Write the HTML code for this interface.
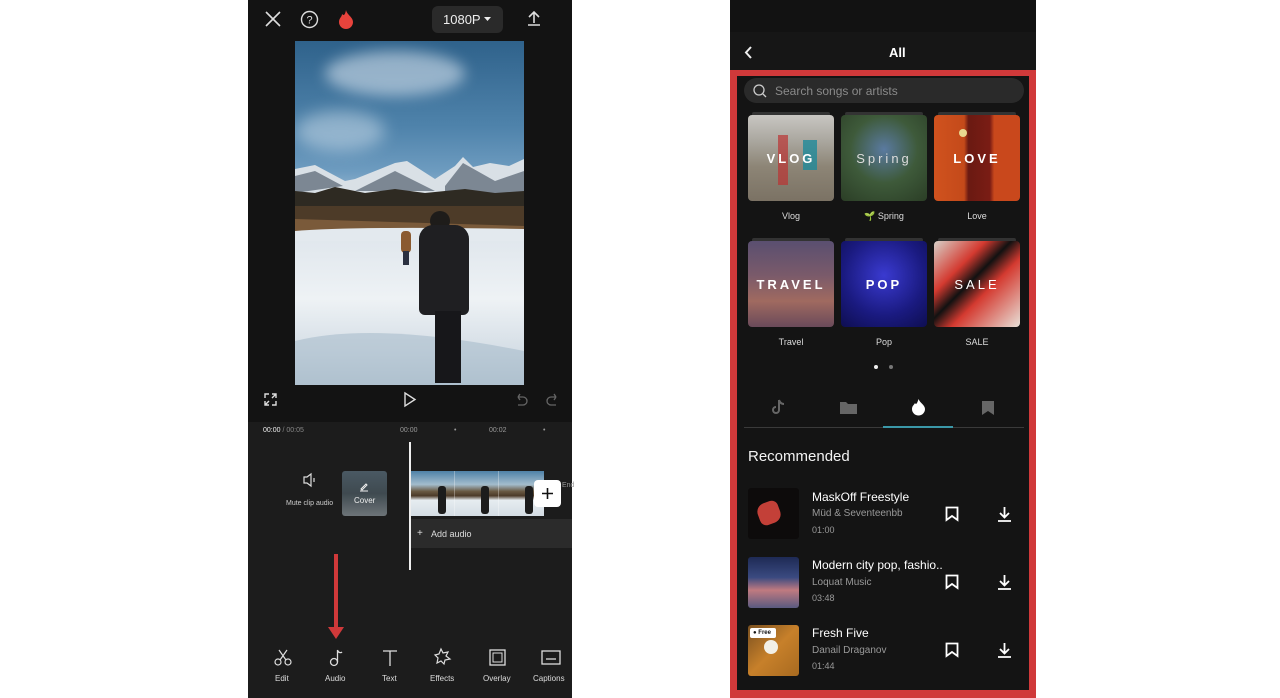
<!DOCTYPE html>
<html><head><meta charset="utf-8">
<style>
*{margin:0;padding:0;box-sizing:border-box}
body{width:1280px;height:698px;background:#fff;position:relative;overflow:hidden;font-family:"Liberation Sans",sans-serif;color:#fff}
.a{position:absolute}
.t{position:absolute;white-space:nowrap}
svg{position:absolute;overflow:visible}
.tile{position:absolute;width:86px;height:86px;border-radius:4px;overflow:hidden}
.tile .lab{position:absolute;left:0;right:0;top:36px;text-align:center;font-size:13px;font-weight:bold;letter-spacing:3px;color:#fff}
.cap{position:absolute;width:86px;text-align:center;font-size:9px;color:#ddd}
.song{position:absolute;left:812px;font-size:12px}
</style></head><body>

<!-- LEFT PHONE -->
<div class="a" style="left:248px;top:0;width:324px;height:698px;background:#131313"></div>
<div class="a" style="left:248px;top:422px;width:324px;height:276px;background:#1c1c1c"></div>
<!-- top bar -->
<svg style="left:264px;top:10px" width="18" height="18"><path d="M2 2L16 16M16 2L2 16" stroke="#ddd" stroke-width="1.6"/></svg>
<svg style="left:300px;top:10px" width="19" height="19"><circle cx="9.5" cy="9.5" r="8" fill="none" stroke="#ddd" stroke-width="1.4"/><text x="9.5" y="13.5" font-size="11" fill="#ddd" text-anchor="middle" font-family="Liberation Sans">?</text></svg>
<svg style="left:337px;top:9px" width="18" height="20"><path d="M9 1C10 6 16 8 16 13A7 7 0 0 1 2 13C2 9 5 8 5 5C7 7 8 6 9 1Z" fill="#e8433c"/></svg>
<div class="a" style="left:432px;top:6px;width:71px;height:27px;border-radius:6px;background:#2a2a2a"></div>
<div class="t" style="left:443px;top:12px;font-size:13px;color:#eee">1080P</div>
<svg style="left:484px;top:17px" width="8" height="5"><path d="M0 0H7L3.5 4Z" fill="#eee"/></svg>
<svg style="left:527px;top:10px" width="14" height="17"><path d="M7 13V2M2 7L7 2L12 7M1 15H13" stroke="#ddd" stroke-width="1.6" fill="none"/></svg>

<!-- video -->
<div class="a" style="left:295px;top:41px;width:229px;height:344px;overflow:hidden;background:linear-gradient(#2f628b 0%,#4f83ab 25%,#6e9cc0 38%,#86acca 42%,#dfe6ec 56%,#eef2f5 75%,#d5dee6 90%,#b9c8d4 100%)">
 <div class="a" style="left:30px;top:10px;width:140px;height:45px;border-radius:50%;background:rgba(225,235,244,.55);filter:blur(7px)"></div>
 <div class="a" style="left:0;top:70px;width:90px;height:40px;border-radius:50%;background:rgba(225,235,244,.45);filter:blur(8px)"></div>
 <svg style="left:0;top:0" width="229" height="344">
  <path d="M0 128L20 124L50 140L60 138L100 122L112 120L140 138L160 125L168 116L178 126L195 122L214 125L229 118V160H0Z" fill="#d9e0e6"/>
  <path d="M0 135L20 130L48 145L0 152Z M60 150L100 130L140 150Z M150 145L168 122L200 140L229 130V155H150Z" fill="#7c8793"/>
  <path d="M0 152H229V192H0Z" fill="#4d3b28"/>
  <path d="M0 150L20 152L40 146L70 152L100 148L130 152L170 148L200 152L229 150V165H0Z" fill="#2e2a22"/>
  <path d="M0 178L229 185V195H0Z" fill="#7a5a3a"/>
  <path d="M0 190Q60 185 229 188V200H0Z" fill="#e3e9ee"/>
  <path d="M0 300Q80 280 229 310V344H0Z" fill="#a9bccb" opacity=".6"/>
 </svg>
 <div class="a" style="left:135px;top:170px;width:20px;height:20px;border-radius:50%;background:#1e1c1a"></div>
 <div class="a" style="left:124px;top:184px;width:50px;height:90px;border-radius:14px 14px 6px 6px;background:#1f1f22"></div>
 <div class="a" style="left:140px;top:270px;width:26px;height:72px;background:#17171a"></div>
 <div class="a" style="left:106px;top:190px;width:10px;height:22px;border-radius:4px;background:#8a5a30"></div>
 <div class="a" style="left:108px;top:210px;width:6px;height:14px;background:#2a3040"></div>
</div>

<!-- controls -->
<svg style="left:264px;top:393px" width="13" height="13"><path d="M1 5V1H5M8 1H12V5M12 8V12H8M5 12H1V8M1 12L5 8M12 1L8 5" stroke="#ddd" stroke-width="1.4" fill="none"/></svg>
<svg style="left:404px;top:392px" width="12" height="15"><path d="M1 1L11 7.5L1 14Z" stroke="#ddd" stroke-width="1.4" fill="none"/></svg>
<svg style="left:515px;top:393px" width="13" height="13"><path d="M3 4H8A4 4 0 0 1 8 12H3M3 4L5 1M3 4L5 7" stroke="#666" stroke-width="1.3" fill="none"/></svg>
<svg style="left:546px;top:393px" width="13" height="13"><path d="M10 4H5A4 4 0 0 0 5 12H10M10 4L8 1M10 4L8 7" stroke="#666" stroke-width="1.3" fill="none"/></svg>

<!-- timeline -->
<div class="t" style="left:263px;top:427px;font-size:7px;color:#eee">00:00 <span style="color:#888">/ 00:05</span></div>
<div class="t" style="left:400px;top:427px;font-size:7px;color:#999">00:00</div>
<div class="t" style="left:454px;top:427px;font-size:7px;color:#999">•</div>
<div class="t" style="left:489px;top:427px;font-size:7px;color:#999">00:02</div>
<div class="t" style="left:543px;top:427px;font-size:7px;color:#999">•</div>
<svg style="left:303px;top:473px" width="14" height="14"><path d="M1 4H4L8 1V13L4 10H1Z" stroke="#ddd" stroke-width="1.2" fill="none"/><path d="M11 5V9" stroke="#ddd" stroke-width="1.2"/></svg>
<div class="t" style="left:286px;top:500px;font-size:7px;color:#ccc">Mute clip audio</div>
<div class="a" style="left:342px;top:471px;width:45px;height:45px;border-radius:3px;background:linear-gradient(#4a5963,#3f4a50 50%,#6d7478)"></div>
<svg style="left:359px;top:482px" width="10" height="10"><path d="M1 9H9M2 7L7 2L8 3L3 8Z" stroke="#eee" stroke-width="1" fill="none"/></svg>
<div class="t" style="left:354px;top:496px;font-size:8px;color:#eee">Cover</div>
<div class="a" style="left:410px;top:471px;width:134px;height:45px;background:linear-gradient(#4f82a8 0%,#a3bccd 30%,#6a5a44 45%,#4c3a28 55%,#e6ecf0 65%,#d4dde4 100%)"></div>
<div class="a" style="left:454px;top:471px;width:1px;height:45px;background:rgba(255,255,255,.3)"></div>
<div class="a" style="left:498px;top:471px;width:1px;height:45px;background:rgba(255,255,255,.3)"></div>
<div class="a" style="left:438px;top:486px;width:8px;height:28px;background:#1c1c1c;border-radius:3px"></div>
<div class="a" style="left:481px;top:486px;width:8px;height:28px;background:#1c1c1c;border-radius:3px"></div>
<div class="a" style="left:525px;top:486px;width:8px;height:28px;background:#1c1c1c;border-radius:3px"></div>
<div class="a" style="left:534px;top:480px;width:27px;height:27px;border-radius:4px;background:#fff"></div>
<svg style="left:541px;top:487px" width="13" height="13"><path d="M6.5 1V12M1 6.5H12" stroke="#111" stroke-width="1.6"/></svg>
<div class="t" style="left:562px;top:482px;font-size:7px;color:#999">End</div>
<div class="a" style="left:410px;top:519px;width:162px;height:29px;background:#2b2b2b"></div>
<div class="t" style="left:417px;top:528px;font-size:10px;color:#ddd">+</div>
<div class="t" style="left:431px;top:529px;font-size:9px;color:#ddd">Add audio</div>
<div class="a" style="left:409px;top:442px;width:2px;height:128px;background:#eee"></div>

<!-- red arrow -->
<div class="a" style="left:334px;top:554px;width:4px;height:76px;background:#d0393a"></div>
<svg style="left:328px;top:627px" width="16" height="12"><path d="M0 0H16L8 12Z" fill="#d0393a"/></svg>

<!-- bottom tools -->
<svg style="left:274px;top:649px" width="18" height="17"><circle cx="4" cy="13" r="3" stroke="#ddd" fill="none" stroke-width="1.2"/><circle cx="14" cy="13" r="3" stroke="#ddd" fill="none" stroke-width="1.2"/><path d="M6 11L13 1M12 11L5 1" stroke="#ddd" stroke-width="1.2"/></svg>
<svg style="left:329px;top:649px" width="16" height="18"><circle cx="5" cy="13" r="3.5" stroke="#ddd" fill="none" stroke-width="1.3"/><path d="M8.5 13V1C9 4 12 4 13 3" stroke="#ddd" fill="none" stroke-width="1.3"/></svg>
<svg style="left:382px;top:650px" width="16" height="16"><path d="M1 1H15M8 1V16" stroke="#ddd" stroke-width="1.3"/></svg>
<svg style="left:434px;top:648px" width="18" height="18"><path d="M7 1L9 5L14 4L12 8L16 11L11 12L10 16L7 13L3 15L4 10L1 7L5 6Z" stroke="#ddd" fill="none" stroke-width="1.2"/></svg>
<svg style="left:489px;top:649px" width="17" height="17"><rect x="1" y="1" width="15" height="15" stroke="#ddd" fill="none" stroke-width="1.3"/><rect x="4" y="4" width="9" height="9" stroke="#ddd" fill="none" stroke-width="1"/></svg>
<svg style="left:541px;top:650px" width="20" height="15"><rect x="1" y="1" width="18" height="13" stroke="#ddd" fill="none" stroke-width="1.3"/><path d="M5 9H15" stroke="#ddd" stroke-width="1.3"/></svg>
<div class="t" style="left:275px;top:674px;font-size:8px;color:#ddd">Edit</div>
<div class="t" style="left:325px;top:674px;font-size:8px;color:#ddd">Audio</div>
<div class="t" style="left:382px;top:674px;font-size:8px;color:#ddd">Text</div>
<div class="t" style="left:430px;top:674px;font-size:8px;color:#ddd">Effects</div>
<div class="t" style="left:483px;top:674px;font-size:8px;color:#ddd">Overlay</div>
<div class="t" style="left:533px;top:674px;font-size:8px;color:#ddd">Captions</div>

<!-- RIGHT PHONE -->
<div class="a" style="left:730px;top:0;width:306px;height:698px;background:#121212"></div>
<div class="a" style="left:730px;top:32px;width:306px;height:38px;background:#161616"></div>
<svg style="left:744px;top:46px" width="8" height="13"><path d="M7 1L2 6.5L7 12" stroke="#eee" stroke-width="2" fill="none"/></svg>
<div class="t" style="left:889px;top:45px;font-size:13px;font-weight:bold">All</div>
<div class="a" style="left:730px;top:70px;width:306px;height:628px;border:7px solid #d0393a;border-width:6px 7px 8px 7px;background:#141414"></div>
<div class="a" style="left:744px;top:78px;width:280px;height:25px;border-radius:13px;background:#2a2a2a"></div>
<svg style="left:753px;top:84px" width="14" height="14"><circle cx="6" cy="6" r="5" stroke="#ccc" fill="none" stroke-width="1.3"/><path d="M10 10L13 13" stroke="#ccc" stroke-width="1.3"/></svg>
<div class="t" style="left:775px;top:84px;font-size:12px;color:#8a8a8a">Search songs or artists</div>

<div class="a" style="left:752px;top:112px;width:78px;height:4px;border-radius:2px;background:#333"></div>
<div class="a" style="left:845px;top:112px;width:78px;height:4px;border-radius:2px;background:#333"></div>
<div class="a" style="left:938px;top:112px;width:78px;height:4px;border-radius:2px;background:#333"></div>
<div class="a" style="left:752px;top:238px;width:78px;height:4px;border-radius:2px;background:#333"></div>
<div class="a" style="left:845px;top:238px;width:78px;height:4px;border-radius:2px;background:#333"></div>
<div class="a" style="left:938px;top:238px;width:78px;height:4px;border-radius:2px;background:#333"></div>

<div class="tile" style="left:748px;top:115px;background:linear-gradient(#c8c6c2 0%,#aaa79f 30%,#8d8576 60%,#7b7264 100%)"><div class="a" style="left:30px;top:20px;width:10px;height:50px;background:#b33;opacity:.7"></div><div class="a" style="left:55px;top:25px;width:14px;height:30px;background:#1f8a9a;opacity:.8"></div><div class="lab">VLOG</div></div>
<div class="tile" style="left:841px;top:115px;background:radial-gradient(circle at 50% 40%,#5a7aa0,#3e5a3a 50%,#2b3e26)"><div class="lab" style="font-weight:normal;color:#ddd">Spring</div></div>
<div class="tile" style="left:934px;top:115px;background:linear-gradient(90deg,#d0521e 0%,#c44a1a 35%,#6a1a12 40%,#7a1c14 65%,#c9481c 70%)"><div class="a" style="left:25px;top:14px;width:8px;height:8px;border-radius:50%;background:#e8d890"></div><div class="lab">LOVE</div></div>
<div class="cap" style="left:748px;top:211px">Vlog</div>
<div class="cap" style="left:841px;top:211px"><span style="color:#7c3">🌱</span> Spring</div>
<div class="cap" style="left:934px;top:211px">Love</div>

<div class="tile" style="left:748px;top:241px;background:linear-gradient(#5a4f70,#7a5a6a 40%,#a06a60 70%,#6a4a5a)"><div class="lab">TRAVEL</div></div>
<div class="tile" style="left:841px;top:241px;background:radial-gradient(circle at 50% 40%,#3a3ad0,#1a1a80 60%,#0e0e50)"><div class="lab">POP</div></div>
<div class="tile" style="left:934px;top:241px;background:linear-gradient(135deg,#d8d0c8 0%,#d43a30 30%,#111 45%,#d43a30 60%,#e8e0d8 100%)"><div class="lab" style="font-weight:normal">SALE</div></div>
<div class="cap" style="left:748px;top:337px">Travel</div>
<div class="cap" style="left:841px;top:337px">Pop</div>
<div class="cap" style="left:934px;top:337px">SALE</div>
<div class="a" style="left:874px;top:365px;width:4px;height:4px;border-radius:50%;background:#eee"></div>
<div class="a" style="left:889px;top:365px;width:4px;height:4px;border-radius:50%;background:#777"></div>

<!-- tabs -->
<svg style="left:772px;top:399px" width="14" height="16"><path d="M7 1V11A3 3 0 1 1 4 8M7 1C8 4 10 5 12 5" stroke="#666" stroke-width="2" fill="none"/></svg>
<svg style="left:839px;top:400px" width="19" height="15"><path d="M1 2H7L9 4H18V14H1Z" fill="#666"/></svg>
<svg style="left:911px;top:398px" width="15" height="18"><path d="M7.5 1C9 5 14 7 14 11A6.5 6.5 0 0 1 1 11C1 8 3 7 4 5C5 7 6 6 7.5 1Z" fill="#fff"/></svg>
<svg style="left:981px;top:400px" width="14" height="16"><path d="M1 1H13V15L7 11L1 15Z" fill="#666"/></svg>
<div class="a" style="left:744px;top:427px;width:280px;height:1px;background:#3a3a3a"></div>
<div class="a" style="left:883px;top:426px;width:70px;height:2px;background:#3b98a8"></div>

<div class="t" style="left:748px;top:448px;font-size:15px;color:#f2f2f2">Recommended</div>

<div class="a" style="left:748px;top:488px;width:51px;height:51px;border-radius:3px;background:#0d0b0b"></div>
<div class="a" style="left:758px;top:502px;width:22px;height:22px;border-radius:40% 30%;background:#c34038;transform:rotate(-20deg)"></div>
<div class="song" style="top:490px">MaskOff Freestyle</div>
<div class="song" style="top:508px;font-size:10px;color:#999">Müd &amp; Seventeenbb</div>
<div class="song" style="top:525px;font-size:9px;color:#999">01:00</div>

<div class="a" style="left:748px;top:557px;width:51px;height:51px;border-radius:3px;background:linear-gradient(#1e2a55,#3a4a80 40%,#c07a80 65%,#5a5a80)"></div>
<div class="song" style="top:558px">Modern city pop, fashio..</div>
<div class="song" style="top:577px;font-size:10px;color:#999">Loquat Music</div>
<div class="song" style="top:593px;font-size:9px;color:#999">03:48</div>

<div class="a" style="left:748px;top:625px;width:51px;height:51px;border-radius:3px;background:linear-gradient(135deg,#7a5020,#c7802a 50%,#a86a20)"></div>
<div class="a" style="left:764px;top:640px;width:14px;height:14px;border-radius:50%;background:#f2efe6"></div>
<div class="a" style="left:750px;top:628px;width:26px;height:10px;border-radius:2px;background:#fff;color:#111;font-size:6px;font-weight:bold;line-height:10px;padding-left:3px">● Free</div>
<div class="song" style="top:626px">Fresh Five</div>
<div class="song" style="top:645px;font-size:10px;color:#999">Danail Draganov</div>
<div class="song" style="top:661px;font-size:9px;color:#999">01:44</div>

<svg style="left:945px;top:506px" width="14" height="16"><path d="M1.5 1.5H12.5V14L7 10L1.5 14Z" stroke="#fff" stroke-width="1.8" fill="none"/></svg>
<svg style="left:945px;top:574px" width="14" height="16"><path d="M1.5 1.5H12.5V14L7 10L1.5 14Z" stroke="#fff" stroke-width="1.8" fill="none"/></svg>
<svg style="left:945px;top:642px" width="14" height="16"><path d="M1.5 1.5H12.5V14L7 10L1.5 14Z" stroke="#fff" stroke-width="1.8" fill="none"/></svg>
<svg style="left:997px;top:506px" width="15" height="16"><path d="M7.5 1V11M3 7L7.5 11.5L12 7M1 15H14" stroke="#fff" stroke-width="1.8" fill="none"/></svg>
<svg style="left:997px;top:574px" width="15" height="16"><path d="M7.5 1V11M3 7L7.5 11.5L12 7M1 15H14" stroke="#fff" stroke-width="1.8" fill="none"/></svg>
<svg style="left:997px;top:642px" width="15" height="16"><path d="M7.5 1V11M3 7L7.5 11.5L12 7M1 15H14" stroke="#fff" stroke-width="1.8" fill="none"/></svg>

</body></html>
